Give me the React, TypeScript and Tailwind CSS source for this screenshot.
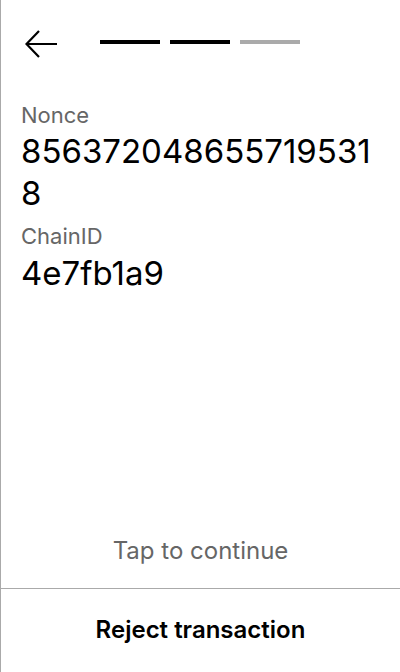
import React from "react";

export default function App() {
  return (
    <div
      className="flex h-[672px] w-[400px] flex-col border-l border-[#aaaaaa] bg-white text-black"
      style={{ fontFamily: "Inter, 'Noto Sans', sans-serif" }}
    >
      <div className="flex h-[86px] items-center pl-[24px]">
        <svg width="34" height="30" viewBox="0 0 34 30" className="mt-[1px]">
          <path d="M32 15 H2 M14 2 L1.5 15 L14 28" fill="none" stroke="black" strokeWidth="2.2" />
        </svg>
        <div className="ml-[41px] flex gap-[10px] pb-[2px]">
          <div className="h-[4px] w-[60px] bg-black" />
          <div className="h-[4px] w-[60px] bg-black" />
          <div className="h-[4px] w-[60px] bg-[#aaaaaa]" />
        </div>
      </div>
      <div className="flex flex-1 flex-col px-[20px] pt-[14px]">
        <div className="text-[22px] leading-[30px] text-[#666666]">Nonce</div>
        <div className="break-all text-[33px] leading-[42px]">8563720486557195318</div>
        <div className="mt-[7px] text-[22px] leading-[30px] text-[#666666]">ChainID</div>
        <div className="text-[33px] leading-[44px]">4e7fb1a9</div>
        <div className="flex-1" />
        <div className="pb-[21px] text-center text-[24px] leading-[32px] text-[#666666]">Tap to continue</div>
      </div>
      <div className="flex h-[84px] items-center justify-center border-t border-[#aaaaaa] pb-[2px] text-[24px] font-semibold">
        Reject transaction
      </div>
    </div>
  );
}
